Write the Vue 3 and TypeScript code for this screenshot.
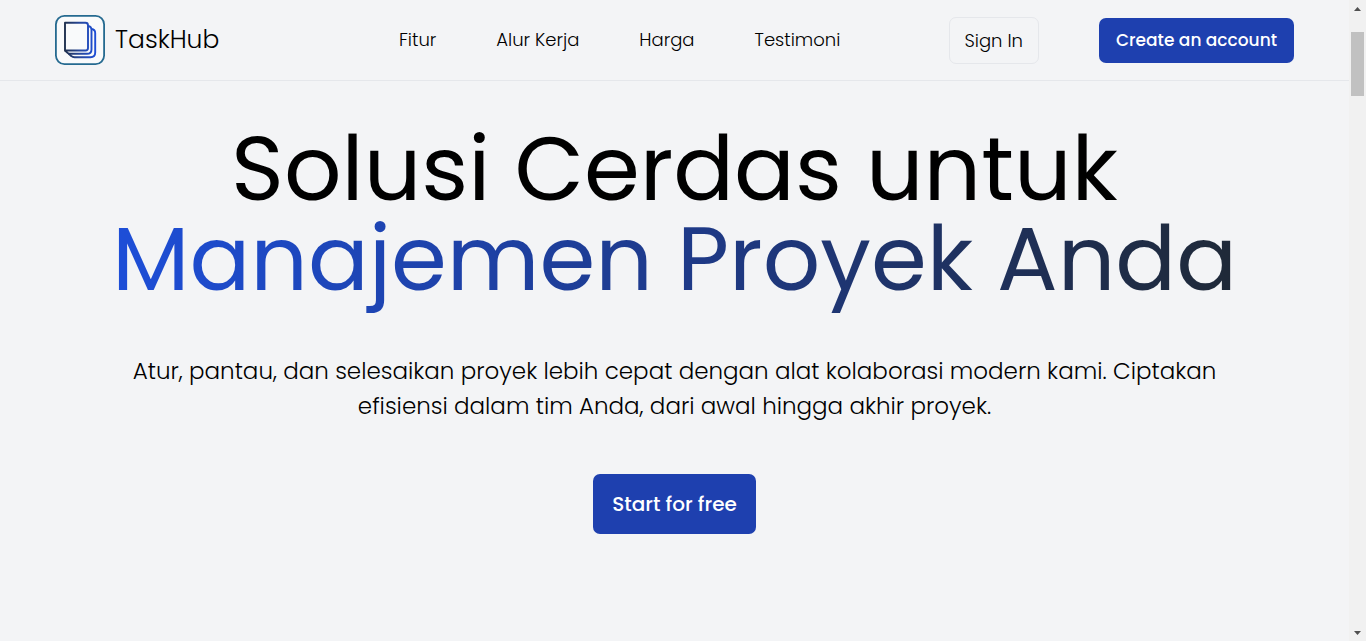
<script setup lang="ts">
interface NavItem {
  label: string
  href: string
}

const navItems: NavItem[] = [
  { label: 'Fitur', href: '#fitur' },
  { label: 'Alur Kerja', href: '#alur-kerja' },
  { label: 'Harga', href: '#harga' },
  { label: 'Testimoni', href: '#testimoni' },
]
</script>

<template>
  <div class="shell">
    <div class="page">
      <header class="topbar">
        <a class="brand" href="#">
          <svg class="brand-mark" viewBox="0 0 50 50" aria-hidden="true">
            <defs>
              <linearGradient id="sheet" gradientUnits="userSpaceOnUse" x1="9" y1="0" x2="41" y2="0">
                <stop offset="0" stop-color="#1f2f4a" />
                <stop offset="0.5" stop-color="#27489c" />
                <stop offset="1" stop-color="#1d4ed8" />
              </linearGradient>
            </defs>
            <rect x="0.9" y="0.9" width="48.2" height="48.2" rx="8.5" fill="#f9fafb" stroke="#256a90" stroke-width="1.8" />
            <g fill="none" stroke="url(#sheet)" stroke-width="1.9" stroke-linejoin="round">
              <path d="M10 7.800H30.500Q33 7.800 33 10.300V33Q33 35.500 30.500 35.500H10Z" />
              <path d="M33 11Q36.500 11.500 36.500 15V34.500Q36.500 38.800 32 38.800H15.500Q13.500 38.800 12.500 37.800L10 35.500" />
              <path d="M36.500 14Q40.200 14.500 40.200 18V37.500Q40.200 42.200 35.500 42.200H19.500Q17.500 42.200 16.500 41.200L13.500 38.500" />
            </g>
          </svg>
          <span class="brand-name">TaskHub</span>
        </a>
        <nav class="links" aria-label="Utama">
          <a v-for="item in navItems" :key="item.href" :href="item.href">{{ item.label }}</a>
        </nav>
        <div class="actions">
          <button class="sign-in" type="button">Sign In</button>
          <button class="create" type="button">Create an account</button>
        </div>
      </header>

      <main class="hero">
        <h1>Solusi Cerdas untuk<br /><span class="accent">Manajemen Proyek Anda</span></h1>
        <p>
          Atur, pantau, dan selesaikan proyek lebih cepat dengan alat kolaborasi modern kami. Ciptakan
          efisiensi dalam tim Anda, dari awal hingga akhir proyek.
        </p>
        <button class="start" type="button">Start for free</button>
      </main>
    </div>

    <div class="scrollbar" aria-hidden="true">
      <svg class="arrow" viewBox="0 0 17 17"><path d="M5 11L8.500 7L12 11Z" fill="#505050" /></svg>
      <div class="track"><div class="thumb"></div></div>
      <svg class="arrow" viewBox="0 0 17 17"><path d="M5 7L8.500 11L12 7Z" fill="#505050" /></svg>
    </div>
  </div>
</template>

<style>
body {
  background: #f3f4f6;
}
</style>

<style scoped>
.shell {
  display: flex;
  min-height: 100vh;
  background: #f3f4f6;
  color: #000;
  font-family: Poppins, Inter, "Open Sans", sans-serif;
}

.page {
  flex: 1;
  min-width: 0;
}

.topbar {
  display: grid;
  grid-template-columns: 344px 1fr auto;
  align-items: center;
  height: 80px;
  padding: 0 55px;
  border-bottom: 1px solid #e5e7eb;
}

a {
  color: inherit;
  text-decoration: none;
}

button {
  border: 0;
  font: inherit;
  cursor: pointer;
  white-space: nowrap;
}

.brand {
  display: flex;
  align-items: center;
  gap: 10px;
}

.brand-mark {
  width: 50px;
  height: 50px;
}

.brand-name {
  font-size: 25px;
  font-weight: 300;
  line-height: 40px;
}

.links {
  display: flex;
  gap: 60px;
  font-size: 18px;
  font-weight: 300;
  line-height: 24px;
  white-space: nowrap;
}

.actions {
  display: flex;
  align-items: center;
  gap: 60px;
  line-height: 25px;
}

.sign-in {
  padding: 10px 15px;
  border: 1px solid #e5e7eb;
  border-radius: 7px;
  background: transparent;
  color: #000;
  font-size: 18px;
  font-weight: 300;
}

.create {
  padding: 10px 17px;
  border-radius: 7px;
  background: #1e40af;
  color: #fff;
  font-size: 17px;
  font-weight: 500;
}

.hero {
  display: flex;
  flex-direction: column;
  align-items: center;
  gap: 50px;
  padding: 43px 55px;
  text-align: center;
}

h1 {
  margin: 0;
  font-size: 90px;
  font-weight: 400;
  line-height: 90px;
}

.accent {
  background: linear-gradient(to right, #1d4ed8, #1e3a8a, #1f2937);
  background-clip: text;
  -webkit-background-clip: text;
  color: transparent;
}

p {
  max-width: 1100px;
  margin: 0;
  font-size: 23px;
  font-weight: 300;
  line-height: 35px;
}

.start {
  padding: 20px 19px;
  border-radius: 7px;
  background: #1e40af;
  color: #fff;
  font-size: 20px;
  font-weight: 500;
  line-height: 20px;
}

.scrollbar {
  position: sticky;
  top: 0;
  display: flex;
  flex-direction: column;
  width: 17px;
  height: 100vh;
  background: #f1f1f1;
}

.arrow {
  width: 17px;
  height: 17px;
}

.track {
  flex: 1;
  padding: 15px 2px 0;
}

.thumb {
  height: 64px;
  background: #c1c1c1;
}
</style>
